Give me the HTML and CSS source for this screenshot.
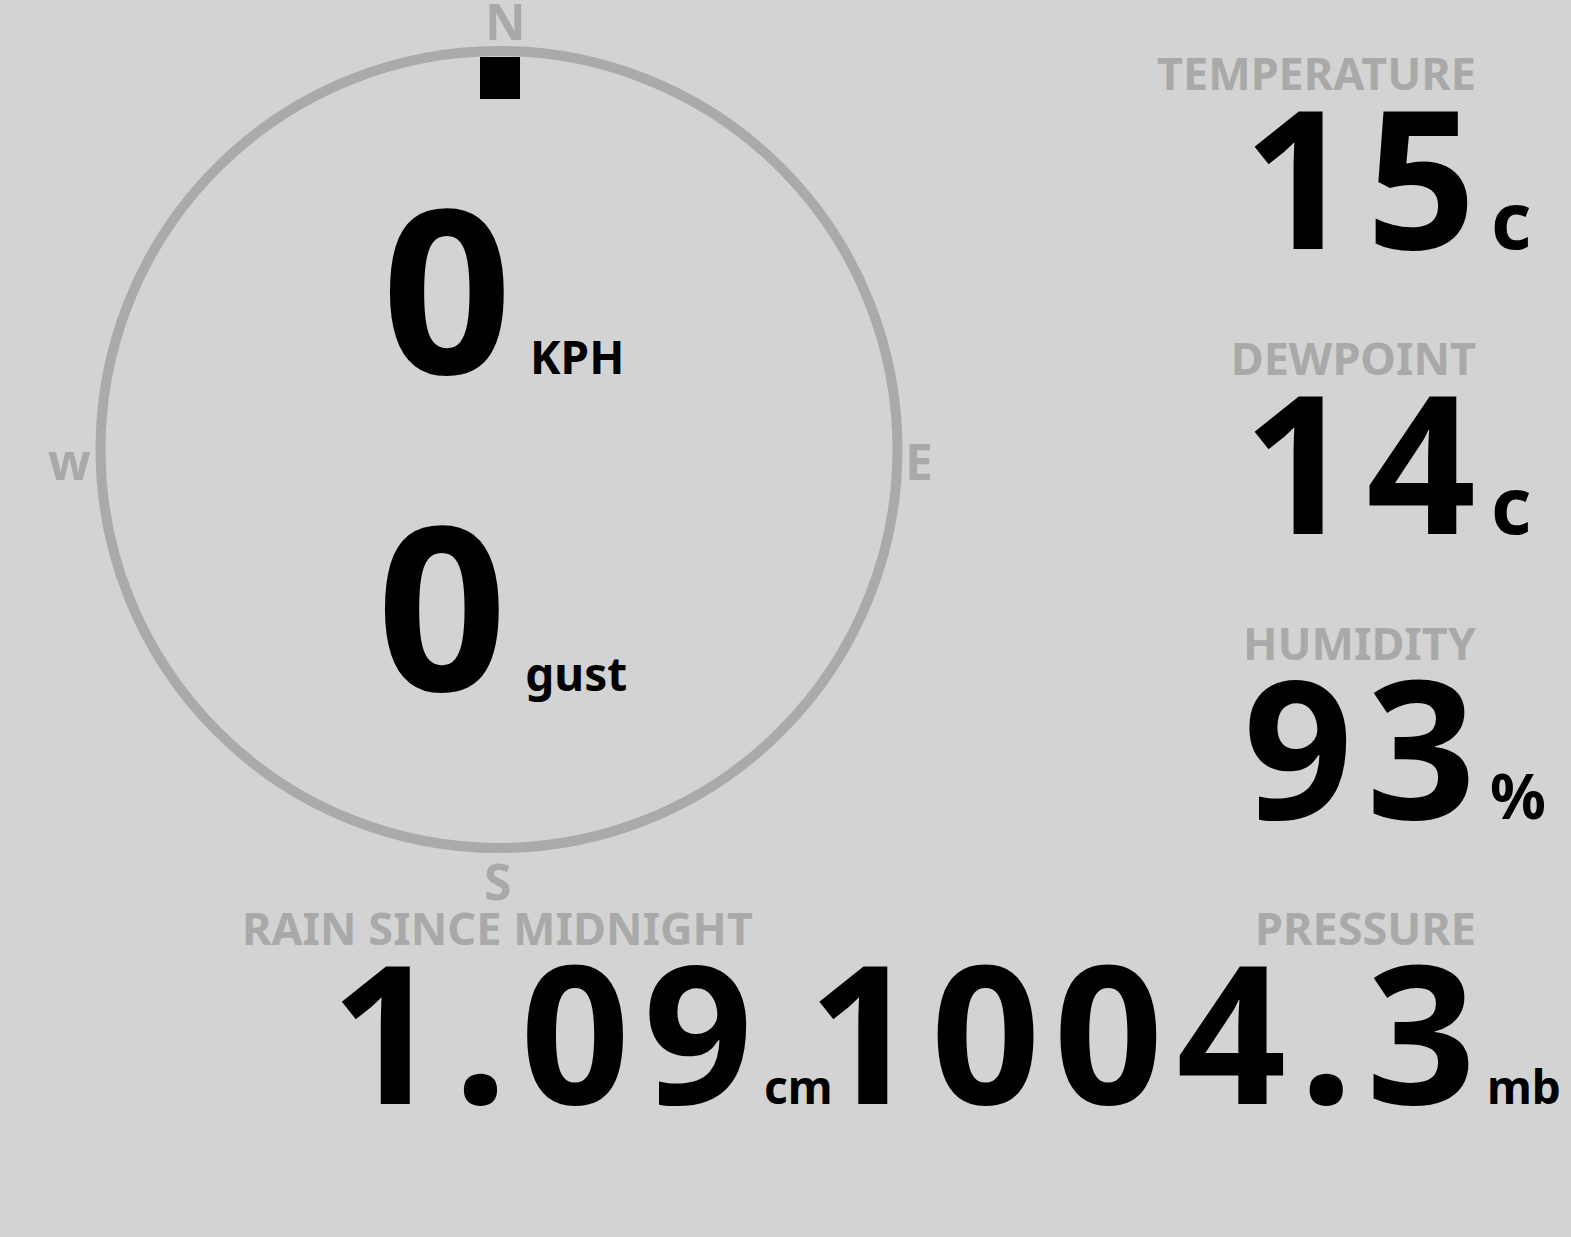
FILE: index.html
```html
<!DOCTYPE html>
<html lang="en">
<head>
  <meta charset="UTF-8" />
  <meta name="viewport" content="width=device-width, initial-scale=1" />
  <title>Weather</title>
  <link rel="stylesheet" href="styles.css">
</head>
<body>
  <div class="dash">
    <div class="compass">
      <svg class="ring" viewBox="0 0 998 905" width="998" height="905">
        <circle cx="499" cy="449.5" r="398.5" fill="none" stroke="#aaa" stroke-width="10" />
        <rect x="480" y="57" width="40" height="42" fill="#000" />
      </svg>
      <span class="dir dir-n">N</span>
      <span class="dir dir-e">E</span>
      <span class="dir dir-s">S</span>
      <span class="dir dir-w">w</span>

      <div class="wind">
        <span class="wind-num">0</span><span class="wind-unit">KPH</span>
      </div>
      <div class="wind wind-gust">
        <span class="wind-num">0</span><span class="wind-unit">gust</span>
      </div>
    </div>

    <div class="side">
      <div class="reading">
        <div class="label">TEMPERATURE</div>
        <div class="num">15</div>
        <div class="unit unit-c">c</div>
      </div>
      <div class="reading">
        <div class="label">DEWPOINT</div>
        <div class="num">14</div>
        <div class="unit unit-c">c</div>
      </div>
      <div class="reading">
        <div class="label">HUMIDITY</div>
        <div class="num">93</div>
        <div class="unit unit-pct">%</div>
      </div>
    </div>

    <div class="reading rain">
      <div class="label">RAIN SINCE MIDNIGHT</div>
      <div class="num">1.09</div>
      <div class="unit">cm</div>
    </div>
    <div class="reading last">
      <div class="label">PRESSURE</div>
      <div class="num">1004.3</div>
      <div class="unit">mb</div>
    </div>
  </div>
</body>
</html>
```

FILE: styles.css
```css
body {
  margin: 0;
  background-color: #d3d3d3;
  color: #000;
  font-family: 'Noto Sans', 'Open Sans', sans-serif;
  font-weight: 700;
  overflow: hidden;
}
.dash {
  display: grid;
  grid-template-columns: 830px minmax(0, 1fr);
  align-items: start;
  width: 1571px;
}
/* compass */
.compass {
  position: relative;
  width: 998px;
  height: 905px;
  padding-top: 174px;
  box-sizing: border-box;
  display: flex;
  flex-direction: column;
  align-items: center;
  gap: 93px;
}
.ring {
  position: absolute;
  top: 0; left: 0;
}
.dir {
  position: absolute;
  font-size: 50px;
  line-height: 42px;
  color: #a9a9a9;
}
.dir-n { top: 0; left: 485px; }
.dir-s { top: 860px; left: 484px; }
.dir-e { top: 440px; left: 905px; }
.dir-w { top: 440px; left: 48px; }
.wind {
  display: flex;
  align-items: baseline;
  height: 224px;
  margin-left: 8px;
}
.wind-gust {
  margin-left: 6px;
}
.wind-num {
  font-size: 228px;
  line-height: 224px;
}
.wind-unit {
  font-size: 46px;
  line-height: 20px;
  margin-left: 18px;
}
/* readings */
.side {
  padding-top: 50px;
}
.reading {
  display: grid;
  grid-template-columns: minmax(0, 1fr) 95px;
  align-items: baseline;
  margin-bottom: 80px;
}
.reading.rain {
  grid-template-columns: minmax(0, 1fr) 77px;
  margin-bottom: 0;
}
.reading.last {
  margin-bottom: 0;
}
.label {
  grid-column: 1;
  justify-self: end;
  font-size: 45px;
  line-height: 45px;
  color: #a9a9a9;
  white-space: nowrap;
}
.num {
  grid-column: 1;
  justify-self: end;
  font-size: 192px;
  line-height: 160px;
  letter-spacing: 13px;
  margin-right: -13px;
  white-space: nowrap;
}
.unit {
  grid-column: 2;
  font-size: 46px;
  line-height: 20px;
  padding-left: 11px;
}
.unit-c {
  font-size: 78px;
  padding-left: 15px;
}
.unit-pct {
  font-size: 62px;
  padding-left: 14px;
}
```
